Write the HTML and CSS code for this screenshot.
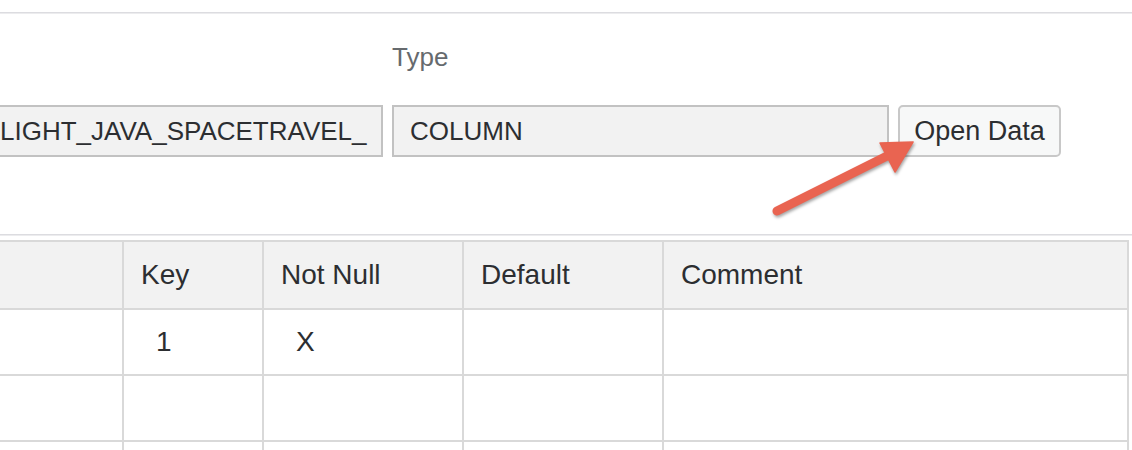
FILE: index.html
```html
<!DOCTYPE html>
<html lang="en">
<head>
<meta charset="utf-8">
<title>Table definition</title>
<link rel="stylesheet" href="styles.css">
</head>
<body>
<div class="page">
  <div class="rule"></div>
  <section class="form">
    <span class="label label-type">Type</span>
    <div class="field field-name"><span class="field-text">LIGHT_JAVA_SPACETRAVEL_</span></div>
    <div class="field field-type"><span class="field-text">COLUMN</span></div>
    <button class="btn" type="button">Open Data</button>
  </section>
  <div class="rule rule-table"></div>
  <div class="grid">
    <div class="cell head"></div>
    <div class="cell head">Key</div>
    <div class="cell head">Not Null</div>
    <div class="cell head">Default</div>
    <div class="cell head">Comment</div>

    <div class="cell"></div>
    <div class="cell body">1</div>
    <div class="cell body">X</div>
    <div class="cell body"></div>
    <div class="cell body"></div>

    <div class="cell"></div>
    <div class="cell body"></div>
    <div class="cell body"></div>
    <div class="cell body"></div>
    <div class="cell body"></div>

    <div class="cell"></div>
    <div class="cell body"></div>
    <div class="cell body"></div>
    <div class="cell body"></div>
    <div class="cell body"></div>
  </div>
  <svg class="arrow" width="1132" height="450" viewBox="0 0 1132 450" aria-hidden="true">
    <g class="arrow-shape">
      <line x1="777" y1="211" x2="893" y2="153" stroke="#e96451" stroke-width="9" stroke-linecap="round"/>
      <polygon points="913,142 880,143 895,172" fill="#e96451" stroke="#e96451" stroke-width="1.5" stroke-linejoin="round"/>
    </g>
  </svg>
</div>
</body>
</html>
```

FILE: styles.css
```css
html, body {
  margin: 0;
  padding: 0;
  background: #ffffff;
}

body {
  font-family: "Liberation Sans", Arial, sans-serif;
  color: #2c2e31;
  width: 1132px;
  height: 450px;
  overflow: hidden;
}

.page {
  position: relative;
  padding-top: 12px;
  height: 438px;
  overflow: hidden;
}

.rule {
  height: 1px;
  background: #dcdce0;
  border-bottom: 1px solid #ececee;
}

.form {
  display: grid;
  grid-template-columns: 383px 497px 163px;
  column-gap: 9px;
  row-gap: 33px;
  margin-top: 28px;
  align-items: center;
}

.label {
  font-size: 26px;
  line-height: 30px;
  color: #666a6e;
}

.label-type {
  grid-column: 2;
  padding-left: 0;
}

.field {
  grid-row: 2;
  box-sizing: border-box;
  height: 52px;
  background: #f2f2f2;
  border: 2px solid #c2c2c2;
  display: flex;
  align-items: center;
  overflow: hidden;
  white-space: nowrap;
  font-size: 26px;
  color: #2c2e31;
}

.field-name {
  border-left: none;
  padding-left: 0;
}

.field-type {
  padding-left: 16px;
}

.btn {
  grid-row: 2;
  box-sizing: border-box;
  height: 52px;
  margin: 0;
  padding: 0;
  background: #f7f8f8;
  border: 2px solid #c8c8c8;
  border-radius: 5px;
  font-family: "Liberation Sans", Arial, sans-serif;
  font-size: 27px;
  color: #2c2e31;
  text-align: center;
}

.rule-table {
  margin-top: 77px;
}

.grid {
  margin-top: 4px;
  display: grid;
  grid-template-columns: 124px 140px 200px 200px 465px;
  grid-template-rows: 68px 66px 66px 66px;
  border-top: 2px solid #d9d9d9;
  width: 1129px;
}

.cell {
  box-sizing: border-box;
  border-right: 2px solid #d9d9d9;
  border-bottom: 2px solid #d9d9d9;
  display: flex;
  align-items: center;
  font-size: 28px;
  color: #2c2e31;
  white-space: nowrap;
}

.cell.head {
  background: #f2f2f2;
  padding-left: 17px;
}

.cell.body {
  padding-left: 32px;
}

.arrow {
  position: absolute;
  top: 0;
  left: 0;
  pointer-events: none;
}

.arrow-shape {
  filter: drop-shadow(1px 2px 1.5px rgba(0, 0, 0, 0.35));
}
```
